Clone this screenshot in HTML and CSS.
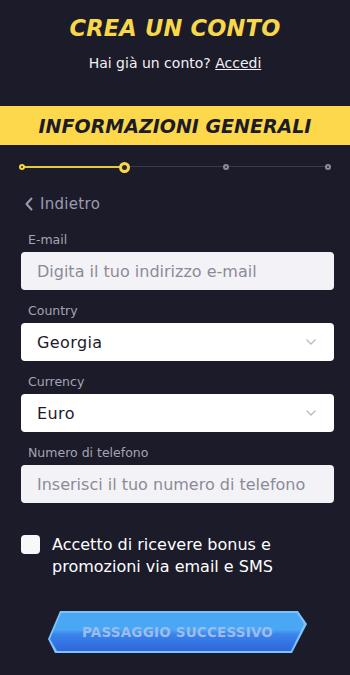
FILE: index.html
```html
<!DOCTYPE html>
<html lang="it">
<head>
<meta charset="utf-8">
<link rel="stylesheet" href="styles.css">
</head>
<body>
<div class="page">
  <header class="top">
    <h1 class="title">CREA UN CONTO</h1>
    <p class="login">Hai già un conto? <a href="#">Accedi</a></p>
  </header>
  <div class="band">INFORMAZIONI GENERALI</div>
  <div class="steps">
    <div class="track"><div class="fill"></div></div>
    <span class="dot done"></span>
    <span class="dot current"></span>
    <span class="dot todo"></span>
    <span class="dot todo"></span>
  </div>
  <form class="form">
    <a class="back" href="#"><svg width="10" height="14" viewBox="0 0 10 14"><path d="M7.5 1.5 L2.5 7 L7.5 12.5" fill="none" stroke="#9b9bb0" stroke-width="2" stroke-linecap="round" stroke-linejoin="round"/></svg>Indietro</a>
    <div class="field">
      <label class="label">E-mail</label>
      <div class="input">Digita il tuo indirizzo e-mail</div>
    </div>
    <div class="field">
      <label class="label">Country</label>
      <div class="input select">Georgia<svg width="12" height="8" viewBox="0 0 12 8"><path d="M1.5 1.5 L6 6 L10.5 1.5" fill="none" stroke="#b9b9c4" stroke-width="1.3"/></svg></div>
    </div>
    <div class="field">
      <label class="label">Currency</label>
      <div class="input select">Euro<svg width="12" height="8" viewBox="0 0 12 8"><path d="M1.5 1.5 L6 6 L10.5 1.5" fill="none" stroke="#b9b9c4" stroke-width="1.3"/></svg></div>
    </div>
    <div class="field">
      <label class="label">Numero di telefono</label>
      <div class="input">Inserisci il tuo numero di telefono</div>
    </div>
    <div class="check">
      <span class="box"></span>
      <span class="check-text">Accetto di ricevere bonus e promozioni via email e SMS</span>
    </div>
    <div class="btn-wrap">
      <div class="btn"><div class="btn-inner">PASSAGGIO SUCCESSIVO</div></div>
    </div>
  </form>
</div>
</body>
</html>
```
FILE: styles.css
```css
html, body {
  margin: 0;
  padding: 0;
  background: #1c1b29;
}
body {
  font-family: "DejaVu Sans", sans-serif;
  color: #fff;
  width: 350px;
  height: 675px;
  overflow: hidden;
}
.page {
  display: flex;
  flex-direction: column;
}
.top {
  display: flex;
  flex-direction: column;
  align-items: center;
  padding-top: 13px;
}
.title {
  margin: 0;
  font-size: 22.5px;
  line-height: 30px;
  font-weight: 800;
  font-style: italic;
  color: #f8d84a;
  letter-spacing: 0.2px;
}
.login {
  margin: 10px 0 0;
  font-size: 14px;
  line-height: 20px;
  color: #f1f1f4;
}
.login a {
  color: #f1f1f4;
  text-decoration: underline;
}
.band {
  margin-top: 33px;
  height: 39px;
  background: #fcd84a;
  color: #1c1b29;
  font-weight: 800;
  font-style: italic;
  font-size: 19px;
  display: flex;
  align-items: center;
  justify-content: center;
}
.steps {
  position: relative;
  margin: 17px 22px 0 22px;
  height: 10px;
  display: flex;
  justify-content: space-between;
  align-items: center;
}
.track {
  position: absolute;
  left: 0;
  right: 0;
  top: 4px;
  height: 1px;
  background: #3a3a4c;
}
.fill {
  width: 101px;
  height: 2px;
  margin-top: -0.5px;
  background: #e6c93f;
}
.dot {
  position: relative;
  box-sizing: border-box;
  border-radius: 50%;
  margin-left: -3px;
  margin-right: -3px;
}
.dot.done {
  width: 6px;
  height: 6px;
  background: #2a2632;
  border: 2px solid #f4d53f;
}
.dot.current {
  width: 11px;
  height: 11px;
  background: #2a2632;
  border: 3px solid #f8d84a;
  margin-left: -5px;
  margin-right: -5px;
}
.dot.todo {
  width: 6px;
  height: 6px;
  background: #2a2a38;
  border: 2px solid #8a8a9c;
}
.form {
  display: flex;
  flex-direction: column;
  padding: 0 16px 0 21px;
}
.back {
  margin-top: 22px;
  margin-left: 3px;
  display: flex;
  align-items: center;
  gap: 6px;
  color: #9b9bb0;
  font-size: 15px;
  line-height: 20px;
  text-decoration: none;
  letter-spacing: 0.3px;
}
.field {
  display: flex;
  flex-direction: column;
  margin-top: 13px;
}
.back + .field {
  margin-top: 18px;
}
.label {
  font-size: 12.5px;
  line-height: 16px;
  color: #a4a4b4;
  margin-left: 7px;
  margin-bottom: 4px;
}
.input {
  box-sizing: border-box;
  height: 38px;
  border-radius: 4px;
  background: #f3f3f7;
  color: #8b8b98;
  font-size: 16px;
  display: flex;
  align-items: center;
  justify-content: space-between;
  padding: 0 17px 0 16px;
  white-space: nowrap;
}
.select {
  background: #fff;
  color: #1c1b29;
  font-size: 16px;
  letter-spacing: 0.4px;
}
.check {
  margin-top: 31px;
  display: flex;
  align-items: flex-start;
  gap: 12px;
}
.box {
  flex: none;
  width: 19px;
  height: 19px;
  border-radius: 4px;
  background: #f8f8fa;
  margin-top: 1px;
}
.check-text {
  font-size: 16px;
  line-height: 22px;
  color: #fff;
  padding-right: 40px;
}
.btn-wrap {
  margin-top: 33px;
  display: flex;
  padding-left: 27px;
}
.btn {
  width: 259px;
  height: 42px;
  background: #7cc2fb;
  clip-path: polygon(12px 0, 250px 0, 259px 13px, 244px 42px, 7px 42px, 0 28px);
  display: flex;
  padding: 2px;
  box-sizing: border-box;
}
.btn-inner {
  flex: 1;
  clip-path: polygon(11px 0, 247px 0, 254px 11px, 241px 38px, 7px 38px, 0 26px);
  background: linear-gradient(180deg, #4aa7f4 0%, #4aa7f4 44%, #3a84ea 56%, #2f66dc 100%);
  color: #9cbdee;
  font-weight: 700;
  font-size: 13.5px;
  display: flex;
  align-items: center;
  justify-content: center;
  letter-spacing: 0.2px;
}
```
